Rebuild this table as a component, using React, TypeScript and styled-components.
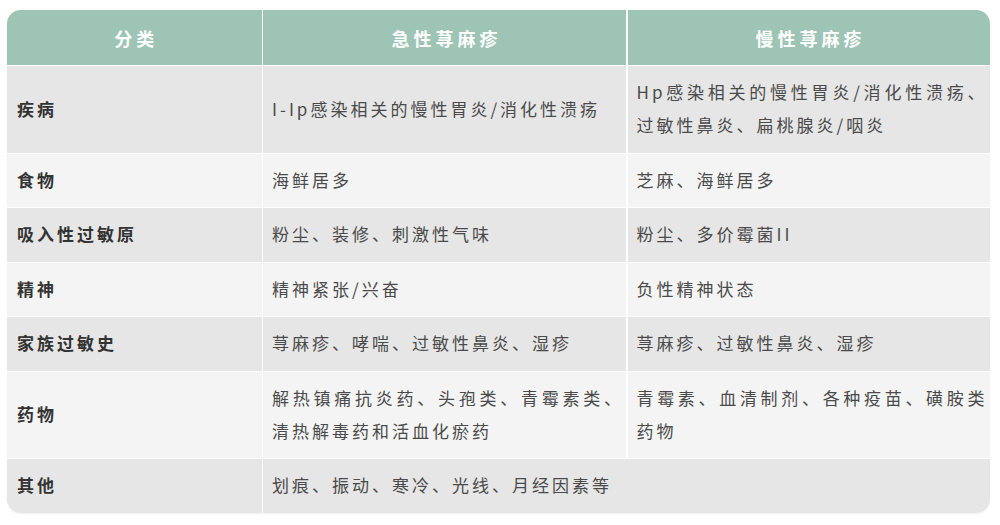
import React from 'react';
import styled, { createGlobalStyle } from 'styled-components';

const GlobalStyle = createGlobalStyle`
  html, body {
    margin: 0;
    padding: 0;
    background: #fff;
  }
  body {
    font-family: "Noto Sans CJK SC", "Noto Sans", sans-serif;
  }
`;

const Page = styled.div`
  padding: 10px 10px 10px 7px;
`;

const Table = styled.div`
  width: 983px;
  display: grid;
  grid-template-columns: 254.5px 363px 362px;
  gap: 1px 1.5px;
  background: #fff;
  border-radius: 14px;
  overflow: hidden;
  box-shadow: 0 1px 2px rgba(0, 0, 0, 0.06);
`;

const HeadCell = styled.div`
  height: 55px;
  display: flex;
  align-items: center;
  justify-content: center;
  padding-left: 4px;
  background: #9dc4b4;
  color: #fff;
  font-size: 18px;
  font-weight: 700;
  letter-spacing: 4px;
`;

const Cell = styled.div<{ $shade: boolean; $label?: boolean; $span?: number }>`
  display: flex;
  align-items: center;
  padding: 9px 2px 11.5px 9px;
  min-height: 33px;
  background: ${p => (p.$shade ? '#e6e6e6' : '#f4f4f4')};
  color: ${p => (p.$label ? '#333' : '#4a4a4a')};
  font-size: 17px;
  font-weight: ${p => (p.$label ? 700 : 400)};
  line-height: 33px;
  letter-spacing: 3px;
  grid-column: ${p => (p.$span ? `span ${p.$span}` : 'auto')};
  padding-left: ${p => (p.$label ? '10px' : '9px')};
`;

const CellText = styled.div`
  width: 100%;
  text-align: justify;
`;

type Row = { label: string; acute: string; chronic?: string };

const rows: Row[] = [
  {
    label: '疾病',
    acute: 'I-Ip感染相关的慢性胃炎/消化性溃疡',
    chronic: 'Hp感染相关的慢性胃炎/消化性溃疡、过敏性鼻炎、扁桃腺炎/咽炎',
  },
  { label: '食物', acute: '海鲜居多', chronic: '芝麻、海鲜居多' },
  { label: '吸入性过敏原', acute: '粉尘、装修、刺激性气味', chronic: '粉尘、多价霉菌II' },
  { label: '精神', acute: '精神紧张/兴奋', chronic: '负性精神状态' },
  { label: '家族过敏史', acute: '荨麻疹、哮喘、过敏性鼻炎、湿疹', chronic: '荨麻疹、过敏性鼻炎、湿疹' },
  {
    label: '药物',
    acute: '解热镇痛抗炎药、头孢类、青霉素类、清热解毒药和活血化瘀药',
    chronic: '青霉素、血清制剂、各种疫苗、磺胺类药物',
  },
  { label: '其他', acute: '划痕、振动、寒冷、光线、月经因素等' },
];

export default function App() {
  return (
    <Page>
      <GlobalStyle />
      <Table>
        <HeadCell>分类</HeadCell>
        <HeadCell>急性荨麻疹</HeadCell>
        <HeadCell>慢性荨麻疹</HeadCell>
        {rows.map((r, i) => {
          const shade = i % 2 === 0;
          return (
            <React.Fragment key={r.label}>
              <Cell $shade={shade} $label>{r.label}</Cell>
              {r.chronic ? (
                <>
                  <Cell $shade={shade}><CellText>{r.acute}</CellText></Cell>
                  <Cell $shade={shade}><CellText>{r.chronic}</CellText></Cell>
                </>
              ) : (
                <Cell $shade={shade} $span={2}><CellText>{r.acute}</CellText></Cell>
              )}
            </React.Fragment>
          );
        })}
      </Table>
    </Page>
  );
}
